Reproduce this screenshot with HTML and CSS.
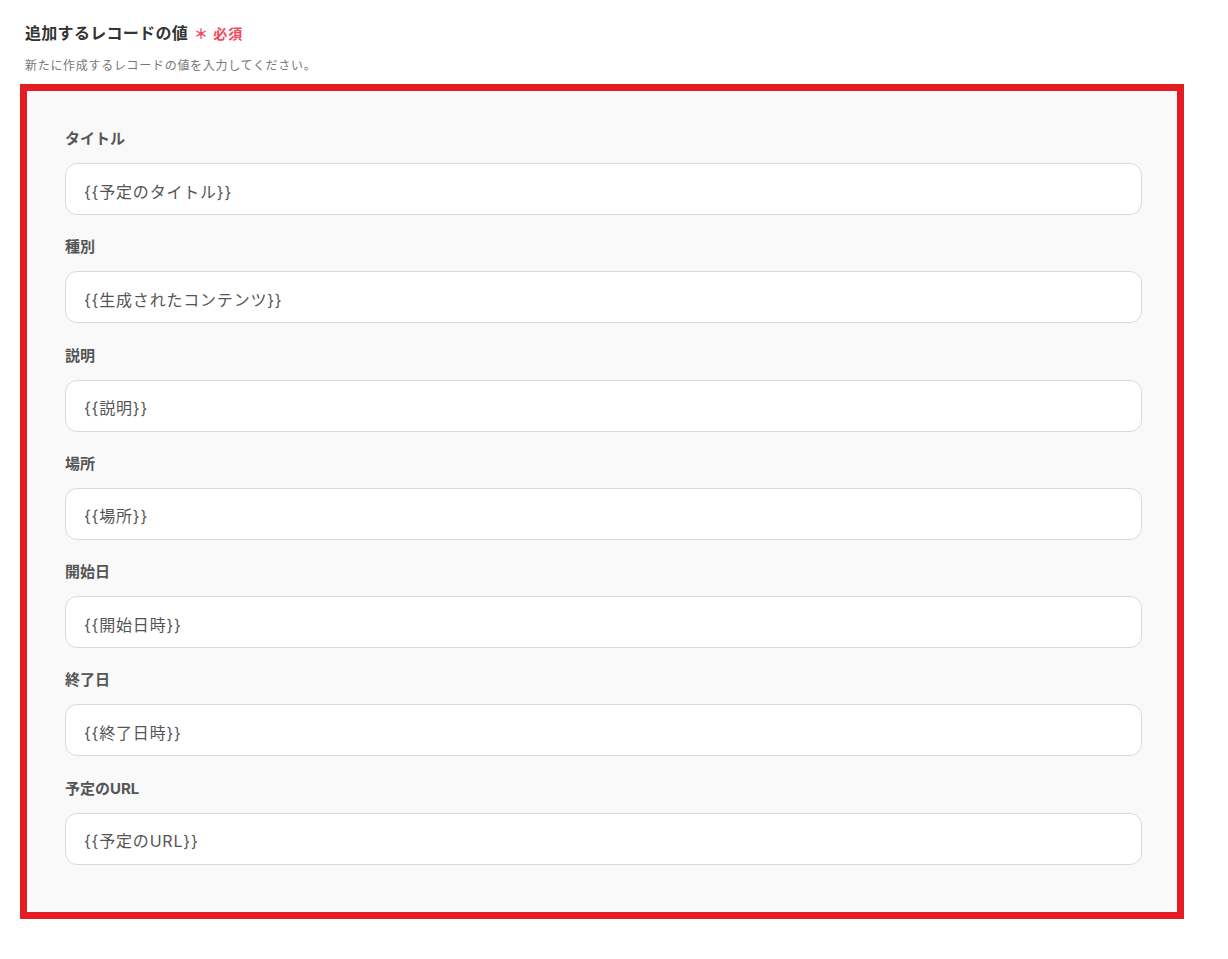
FILE: index.html
```html
<!DOCTYPE html>
<html lang="ja">
<head>
    <meta charset="UTF-8">
    <meta name="viewport" content="width=device-width, initial-scale=1.0">
    <title>追加するレコードの値</title>
    <link rel="stylesheet" href="styles.css">
</head>
<body>
    <div class="section">
        <h2 class="section-title">追加するレコードの値<span class="required">＊ 必須</span></h2>
        <p class="section-note">新たに作成するレコードの値を入力してください。</p>

        <div class="record-box">
            <div class="field">
                <label class="field-label">タイトル</label>
                <div class="field-input">{{予定のタイトル}}</div>
            </div>
            <div class="field">
                <label class="field-label">種別</label>
                <div class="field-input">{{生成されたコンテンツ}}</div>
            </div>
            <div class="field">
                <label class="field-label">説明</label>
                <div class="field-input">{{説明}}</div>
            </div>
            <div class="field">
                <label class="field-label">場所</label>
                <div class="field-input">{{場所}}</div>
            </div>
            <div class="field">
                <label class="field-label">開始日</label>
                <div class="field-input">{{開始日時}}</div>
            </div>
            <div class="field">
                <label class="field-label">終了日</label>
                <div class="field-input">{{終了日時}}</div>
            </div>
            <div class="field">
                <label class="field-label">予定のURL</label>
                <div class="field-input">{{予定のURL}}</div>
            </div>
        </div>
    </div>
</body>
</html>
```

FILE: styles.css
```css
body {
    margin: 0;
    background-color: #fff;
    font-family: Inter, "Noto Sans CJK JP", sans-serif;
    color: #333;
}
.section {
    padding: 22px 20px 0 20px;
    width: 1164px;
}
.section-title {
    margin: 0 0 0 5px;
    font-size: 16px;
    line-height: 22px;
    font-weight: bold;
    letter-spacing: 0.3px;
    color: #333;
}
.required {
    margin-left: 6px;
    font-size: 14px;
    letter-spacing: 1px;
    color: #f0475d;
}
.section-note {
    margin: 13px 0 10px 5px;
    font-size: 12px;
    line-height: 16px;
    letter-spacing: 0.7px;
    color: #777;
}
.record-box {
    border: 7px solid #e51d23;
    background-color: #f9f9fa;
    padding: 38px 35px 47px 38px;
    display: flex;
    flex-direction: column;
    gap: 22.3px;
}
.field {
    display: flex;
    flex-direction: column;
    gap: 14px;
}
.field-label {
    font-size: 15px;
    line-height: 20px;
    font-weight: bold;
    color: #555;
}
.field-input {
    height: 47px;
    border: 1px solid #d6dbe2;
    border-radius: 12px;
    background-color: #fff;
    padding: 3px 18px 0 18px;
    display: flex;
    align-items: center;
    font-size: 16px;
    letter-spacing: 0.8px;
    color: #555;
}
```
